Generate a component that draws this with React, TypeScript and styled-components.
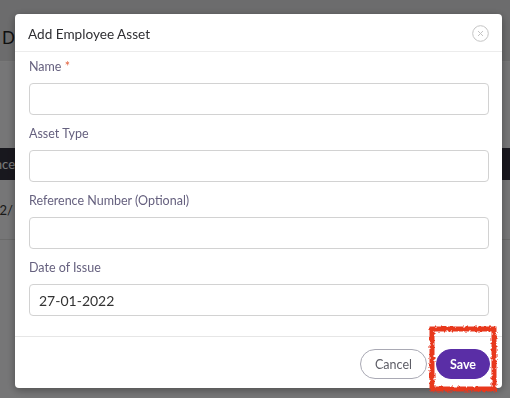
import React from "react";
import styled, { createGlobalStyle } from "styled-components";

const Global = createGlobalStyle`
  html, body { margin: 0; padding: 0; }
  body { width: 510px; height: 398px; overflow: hidden; font-family: Lato, "Open Sans", sans-serif; background: #f4f4f6; }
  * { box-sizing: border-box; }
`;

const Page = styled.div`
  width: 510px;
  height: 398px;
  display: flex;
  flex-direction: column;
  background: #f6f6f8;
`;

const PageHeader = styled.div`
  height: 62px;
  display: flex;
  align-items: flex-end;
  padding: 0 0 13px 2px;
  background: #e2e2e4;
  border-bottom: 1px solid #fafafa;
  font-size: 17px;
  color: #222;
`;

const PageBody = styled.div`
  display: flex;
  flex-direction: column;
  padding-top: 86px;
`;

const TableHead = styled.div`
  height: 32px;
  display: flex;
  align-items: center;
  background: #34323f;
  color: #fff;
  font-size: 13px;
`;

const Clip = styled.div<{ $w: number; $start?: boolean }>`
  width: ${(p) => p.$w}px;
  overflow: hidden;
  display: flex;
  justify-content: ${(p) => (p.$start ? "flex-start" : "flex-end")};
  white-space: nowrap;
`;

const TableRow = styled.div`
  height: 60px;
  display: flex;
  align-items: center;
  font-size: 13px;
  color: #333;
  border-bottom: 1px solid #ddd;
`;

const Overlay = styled.div`
  position: fixed;
  inset: 0;
  background: rgba(0, 0, 0, 0.52);
  display: flex;
  padding: 14px 8px 10px 15px;
`;

const Modal = styled.div`
  position: relative;
  flex: 1;
  background: #fff;
  border-radius: 4px;
  box-shadow: 0 2px 8px rgba(0, 0, 0, 0.35);
  display: flex;
  flex-direction: column;
`;

const Header = styled.div`
  height: 38px;
  display: flex;
  align-items: center;
  justify-content: space-between;
  padding: 2px 13px 0 13px;
  border-bottom: 1px solid #ececec;
`;

const Title = styled.div`
  font-size: 13.6px;
  color: #2f2f33;
`;

const Close = styled.button`
  width: 17px;
  height: 17px;
  padding: 0;
  border: none;
  background: none;
  display: flex;
  color: #c4c4c4;
`;

const Body = styled.div`
  flex: 1;
  display: flex;
  flex-direction: column;
  gap: 11px;
  padding: 7px 13px 0 14px;
`;

const Field = styled.div`
  display: flex;
  flex-direction: column;
  gap: 8px;
`;

const Label = styled.label`
  font-size: 12.5px;
  line-height: 16px;
  color: #66617f;
`;

const Star = styled.span`
  color: #e2603c;
`;

const Input = styled.input`
  height: 32px;
  width: 100%;
  border: 1px solid #d2d2d2;
  border-radius: 4px;
  padding: 0 9px;
  font-family: Lato, "Open Sans", sans-serif;
  font-size: 14px;
  color: #333;
  outline: none;
`;

const Footer = styled.div`
  height: 52px;
  border-top: 1px solid #e6e6e6;
  display: flex;
  align-items: flex-start;
  justify-content: flex-end;
  gap: 9px;
  padding: 12px 12px 0 0;
`;

const Button = styled.button<{ $primary?: boolean }>`
  position: relative;
  height: 30px;
  padding: 0 ${(p) => (p.$primary ? 13 : 14)}px;
  border-radius: 15px;
  font-family: Lato, "Open Sans", sans-serif;
  font-size: 12.5px;
  font-weight: ${(p) => (p.$primary ? 700 : 400)};
  border: 1px solid ${(p) => (p.$primary ? "#5a2ea6" : "#a9a9b4")};
  background: ${(p) => (p.$primary ? "#5a2ea6" : "#fff")};
  color: ${(p) => (p.$primary ? "#fff" : "#5d5d66")};
`;

const Scribble = styled.svg`
  position: absolute;
  left: -8px;
  top: -24px;
  width: 68px;
  height: 66px;
  overflow: visible;
  pointer-events: none;
`;

export default function App() {
  return (
    <>
      <Global />
      <Page>
        <PageHeader>
          <Clip $w={14} $start>
            Details
          </Clip>
        </PageHeader>
        <PageBody>
          <TableHead>
            <Clip $w={15}>Reference</Clip>
          </TableHead>
          <TableRow>
            <Clip $w={13}>12/</Clip>
          </TableRow>
        </PageBody>
      </Page>
      <Overlay>
        <Modal>
          <Header>
            <Title>Add Employee Asset</Title>
            <Close aria-label="Close">
              <svg width="17" height="17" viewBox="0 0 17 17" fill="none" stroke="currentColor" strokeWidth="1">
                <circle cx="8.5" cy="8.5" r="7.8" />
                <path d="M6 6l5 5M11 6l-5 5" />
              </svg>
            </Close>
          </Header>
          <Body>
            <Field>
              <Label>
                Name <Star>*</Star>
              </Label>
              <Input />
            </Field>
            <Field>
              <Label>Asset Type</Label>
              <Input />
            </Field>
            <Field>
              <Label>Reference Number (Optional)</Label>
              <Input />
            </Field>
            <Field>
              <Label>Date of Issue</Label>
              <Input defaultValue="27-01-2022" />
            </Field>
          </Body>
          <Footer>
            <Button>Cancel</Button>
            <Button $primary>
              Save
              <Scribble viewBox="0 0 68 66">
                <defs>
                  <filter id="rough">
                    <feTurbulence type="fractalNoise" baseFrequency="0.35" numOctaves="2" seed="3" />
                    <feDisplacementMap in="SourceGraphic" scale="4" />
                  </filter>
                </defs>
                <rect x="3" y="3" width="62" height="60" fill="none" stroke="#e8391f" strokeWidth="5" filter="url(#rough)" />
              </Scribble>
            </Button>
          </Footer>
        </Modal>
      </Overlay>
    </>
  );
}
